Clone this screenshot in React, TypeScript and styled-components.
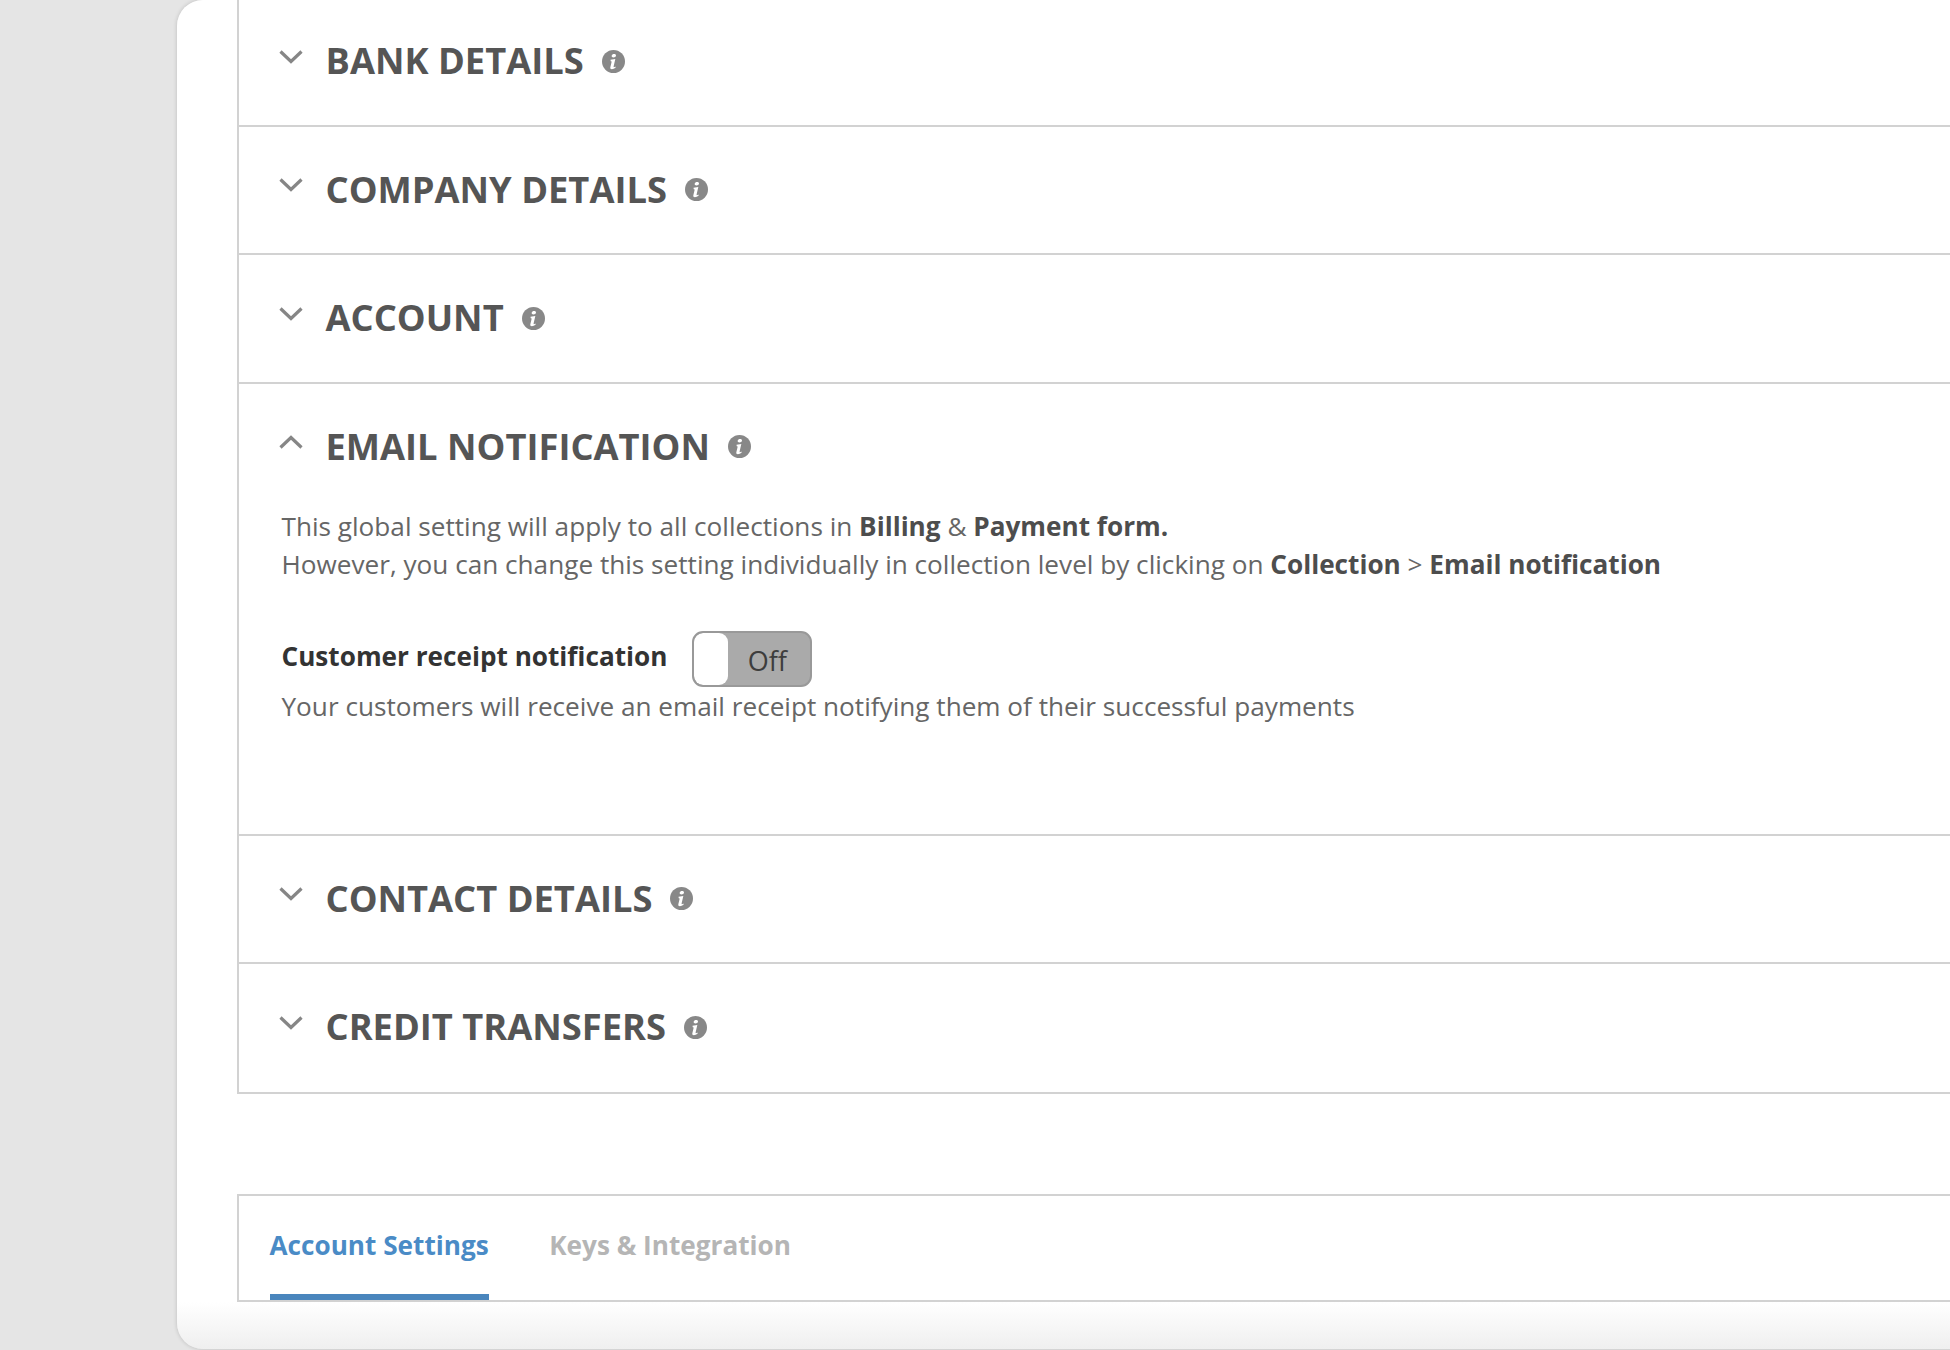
import styled, { createGlobalStyle } from "styled-components";

const GlobalStyle = createGlobalStyle`
  html, body {
    margin: 0;
    padding: 0;
    width: 1950px;
    height: 1350px;
    overflow: hidden;
    background: #e5e5e5;
    font-family: "Open Sans", "Liberation Sans", sans-serif;
  }
`;

const Page = styled.div`
  display: flex;
  width: 1950px;
  height: 1350px;
  padding-left: 177px;
  box-sizing: border-box;
  overflow: hidden;
`;

const Card = styled.main`
  flex: none;
  width: 1900px;
  height: 1349px;
  box-sizing: border-box;
  padding-left: 60px;
  background: linear-gradient(to bottom, #fff 0, #fff 1302px, #efefef 1349px);
  border-radius: 26px;
  box-shadow: 0 0 4px rgba(0, 0, 0, 0.18);
`;

const Panel = styled.section`
  margin-top: -2px;
  border-left: 2px solid #d2d2d2;
  border-bottom: 2px solid #d2d2d2;
`;

const Row = styled.div`
  box-sizing: border-box;
  height: ${(p: { $open?: boolean }) => (p.$open ? "452px" : "128.6px")};
  border-bottom: 2px solid #d2d2d2;
  padding: 39px 0 0 40px;

  &:last-child {
    border-bottom: 0;
    height: 127.5px;
  }
`;

const RowHead = styled.div`
  display: flex;
  align-items: center;
  height: 48px;
`;

const Chevron = styled.svg`
  width: 24px;
  height: 14px;
  margin: -9px 22.5px 0 0;
  flex: none;
`;

const Title = styled.h2`
  margin: -2px 0 0;
  font-size: 36.3px;
  font-weight: 700;
  line-height: 48px;
  color: #555;
`;

const InfoIcon = styled.svg`
  width: 23px;
  height: 23px;
  margin-left: 18px;
  flex: none;
`;

const Body = styled.div`
  padding: 37.5px 0 0 2.5px;
  font-size: 26.17px;
  line-height: 37.5px;
  color: #666;

  b {
    font-weight: 700;
    color: #4d4d4d;
  }
`;

const SettingRow = styled.div`
  display: flex;
  align-items: center;
  gap: 25px;
  margin-top: 47.5px;
  height: 56px;
`;

const SettingLabel = styled.span`
  padding-bottom: 4px;
  font-weight: 700;
  color: #333;
`;

const Toggle = styled.div`
  display: flex;
  align-items: center;
  box-sizing: border-box;
  width: 120px;
  height: 56px;
  background: #aaa;
  border: 2px solid #999;
  border-radius: 11px;
  overflow: hidden;
`;

const Knob = styled.span`
  width: 34px;
  height: 100%;
  flex: none;
  background: #fff;
  border-radius: 9px;
`;

const ToggleText = styled.span`
  flex: 1;
  text-align: center;
  font-size: 27px;
  color: #3d3d3d;
  padding: 3px 4px 0 0;
`;

const Hint = styled.p`
  margin: 1px 0 0;
`;

const TabBar = styled.nav`
  display: flex;
  gap: 60.5px;
  box-sizing: border-box;
  height: 108px;
  margin-top: 100px;
  padding-left: 30.5px;
  border: 2px solid #d2d2d2;
  border-right: 0;
`;

const Tab = styled.a<{ $active?: boolean }>`
  display: block;
  box-sizing: border-box;
  height: 104px;
  padding-top: 29px;
  font-size: 26.17px;
  font-weight: 700;
  line-height: 40px;
  color: ${(p) => (p.$active ? "#4a8bc6" : "#b5b5b5")};
  border-bottom: 6px solid ${(p) => (p.$active ? "#4a86bd" : "transparent")};
`;

const ChevronIcon = ({ up }: { up?: boolean }) => (
  <Chevron viewBox="0 0 24 14" fill="none" stroke="#868686" strokeWidth="3.2">
    <path d={up ? "M1.5 12.5 12 2.5l10.5 10" : "M1.5 1.5 12 11.5l10.5-10"} />
  </Chevron>
);

const Info = () => (
  <InfoIcon viewBox="0 0 24 24">
    <circle cx="12" cy="12" r="12" fill="#888" />
    <path
      fill="#fff"
      d="M12.6 4.2c1.3 0 2.2.7 2 1.8-.2 1.1-1.4 1.8-2.6 1.8-1.3 0-2.1-.7-1.9-1.8.2-1.1 1.3-1.8 2.5-1.8zM8.9 10.2l5-.9-1.8 7.9c-.1.5.1.7.4.7.4 0 .9-.2 1.5-.6l.3.9c-1.5 1.2-2.8 1.8-4 1.8-1.3 0-1.9-.8-1.6-2l1.3-5.5c.1-.5-.1-.7-.9-.8z"
    />
  </InfoIcon>
);

const sections = [
  { title: "BANK DETAILS" },
  { title: "COMPANY DETAILS" },
  { title: "ACCOUNT" },
  { title: "EMAIL NOTIFICATION", open: true },
  { title: "CONTACT DETAILS" },
  { title: "CREDIT TRANSFERS" },
];

const App = () => (
  <>
    <GlobalStyle />
    <Page>
      <Card>
        <Panel>
          {sections.map((s) => (
            <Row key={s.title} $open={s.open}>
              <RowHead>
                <ChevronIcon up={s.open} />
                <Title>{s.title}</Title>
                <Info />
              </RowHead>
              {s.open && (
                <Body>
                  This global setting will apply to all collections in <b>Billing</b> &amp;{" "}
                  <b>Payment form.</b>
                  <br />
                  However, you can change this setting individually in collection level by
                  clicking on <b>Collection</b> &gt; <b>Email notification</b>
                  <SettingRow>
                    <SettingLabel>Customer receipt notification</SettingLabel>
                    <Toggle>
                      <Knob />
                      <ToggleText>Off</ToggleText>
                    </Toggle>
                  </SettingRow>
                  <Hint>
                    Your customers will receive an email receipt notifying them of their
                    successful payments
                  </Hint>
                </Body>
              )}
            </Row>
          ))}
        </Panel>
        <TabBar>
          <Tab $active>Account Settings</Tab>
          <Tab>Keys &amp; Integration</Tab>
        </TabBar>
      </Card>
    </Page>
  </>
);

export default App;
